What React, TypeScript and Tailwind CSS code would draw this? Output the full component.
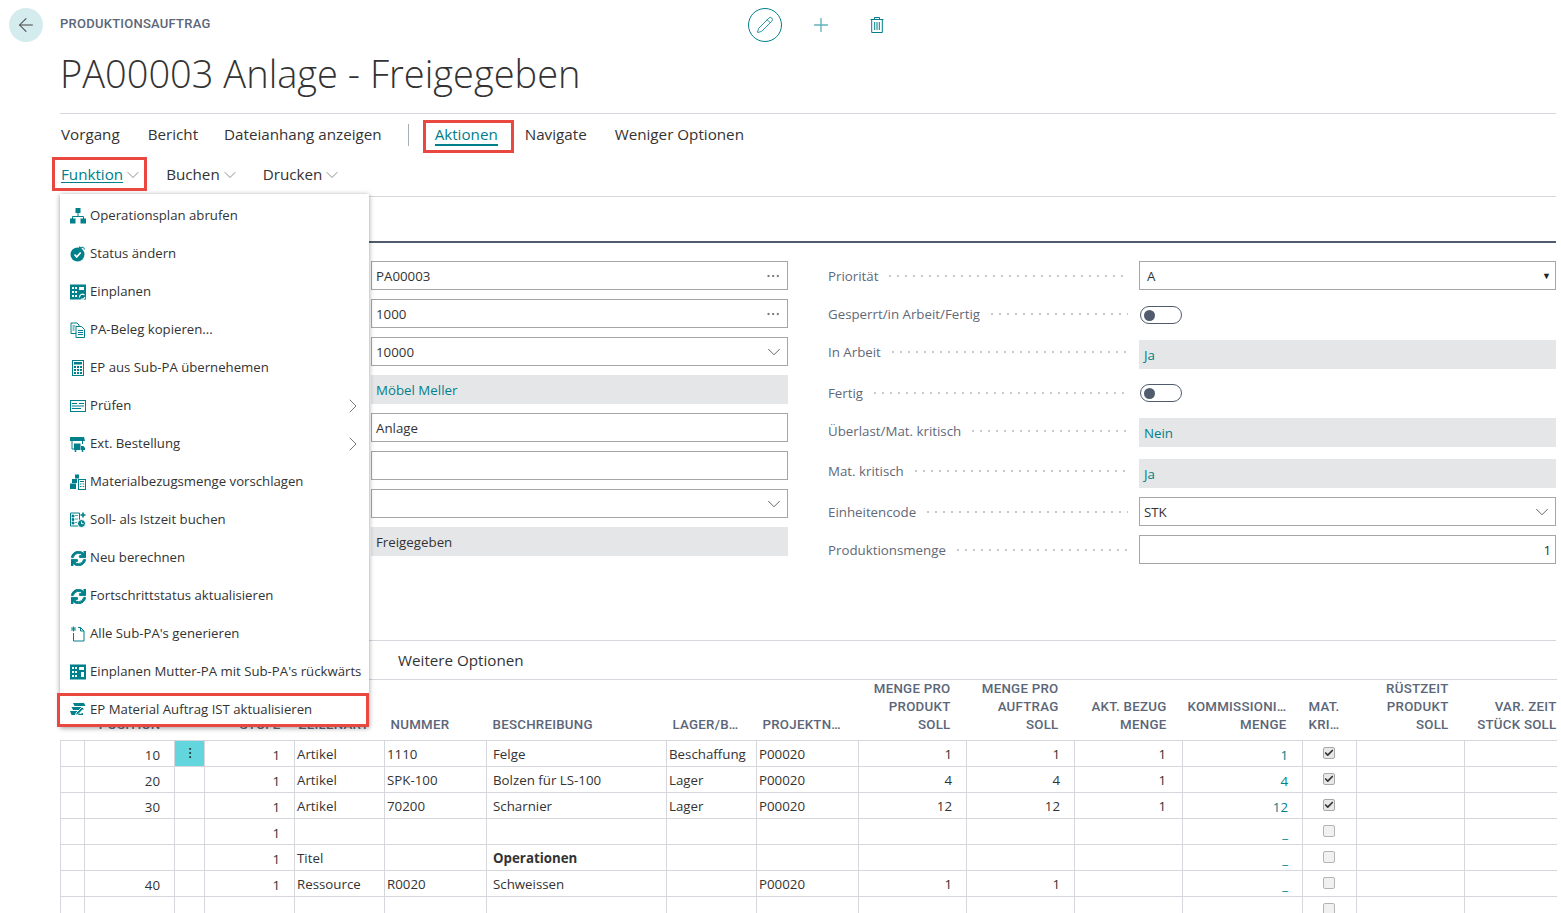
import React from 'react';
import { ArrowLeft, ChevronDown, ChevronRight, EllipsisVertical, Ellipsis, Pencil, Plus, Check } from 'lucide-react';
import { FaSync } from 'react-icons/fa';

const TEAL = '#00808a';

function Svg({ children }: { children: React.ReactNode }) {
  return (
    <svg width="16" height="16" viewBox="0 0 16 16" fill="none" stroke={TEAL} strokeWidth="1" className="shrink-0">
      {children}
    </svg>
  );
}

function OrgIcon() {
  return (
    <Svg>
      <rect x="5.5" y="0" width="5" height="5" fill={TEAL} stroke="none" />
      <path d="M8 5v4M2.5 11V8.5h11V11" />
      <rect x="0" y="10.5" width="5.5" height="5" fill={TEAL} stroke="none" />
      <rect x="10.5" y="10.5" width="5.5" height="5" fill={TEAL} stroke="none" />
    </Svg>
  );
}

function StatusIcon() {
  return (
    <Svg>
      <circle cx="7.5" cy="8.5" r="7" fill={TEAL} stroke="none" />
      <path d="M4.5 8.5l2.2 2.4 4-4.4" stroke="#fff" strokeWidth="1.7" />
      <path d="M9.5 2.2c2-1.8 4.5-1 5 1.3M9.5 0.5v2.3h2.3" stroke={TEAL} strokeWidth="1.1" fill="#fff" />
    </Svg>
  );
}

function PlanIcon({ arrow }: { arrow?: boolean }) {
  return (
    <Svg>
      <rect x="0" y="0.5" width="16" height="15" fill={TEAL} stroke="none" />
      <path d="M2 3h2v2H2zM5 3h2v2H5zM2 7h2v2H2zM5 7h2v2H5zM2 11h2v2H2zM5 11h2v2H5zM9 3h5v3H9z" fill="#fff" stroke="none" />
      {arrow && <path d="M9.5 13.5a3 3 0 0 1 5-2.5M15 13a3 3 0 0 1-4 2" stroke="#fff" strokeWidth="1.2" />}
      {!arrow && <path d="M11 8h3v5h-3z" fill="#fff" stroke="none" />}
    </Svg>
  );
}

function CopyIcon() {
  return (
    <Svg>
      <path d="M6 11.5H1V1h6l2 2v1.5" />
      <path d="M6 4.5h5.5l3 3v8H6z" fill="#fff" />
      <path d="M8 8.5h5M8 10.5h5M8 12.5h5M2.5 4h3M2.5 6h2M2.5 8h2" />
    </Svg>
  );
}

function CalcIcon() {
  return (
    <Svg>
      <rect x="2.5" y="0.5" width="11" height="15" />
      <rect x="4" y="2" width="8" height="2.5" fill={TEAL} stroke="none" />
      <path d="M4 6h2v2H4zM7 6h2v2H7zM10 6h2v2h-2zM4 9h2v2H4zM7 9h2v2H7zM10 9h2v2h-2zM4 12h2v2H4zM7 12h2v2H7zM10 12h2v2h-2z" fill={TEAL} stroke="none" />
    </Svg>
  );
}

function CheckListIcon() {
  return (
    <Svg>
      <rect x="0.5" y="2.5" width="15" height="11" />
      <path d="M2 5.5h5M9 5.5h5M2 8h12M2 10.5h9" />
    </Svg>
  );
}

function StoreIcon() {
  return (
    <Svg>
      <path d="M0 1h14l1 4H0z" fill={TEAL} stroke="none" />
      <path d="M2 5v8h2M12.5 5v3" />
      <rect x="4" y="7.5" width="6.5" height="6.5" fill={TEAL} stroke="none" />
      <path d="M11 10h2.5l1.5 2v2h-4z" stroke="none" fill={TEAL} />
      <circle cx="5.5" cy="15" r="1" fill={TEAL} stroke="none" />
      <circle cx="12.5" cy="15" r="1" fill={TEAL} stroke="none" />
    </Svg>
  );
}

function BoxesIcon() {
  return (
    <Svg>
      <path d="M5 0.5h4v4H5z" fill={TEAL} stroke="none" />
      <path d="M2 5h5v4H2zM0 9.5h6V15H0z" fill={TEAL} stroke="none" />
      <rect x="8.5" y="5.5" width="7" height="10" fill="#fff" />
      <path d="M10 7.5h4M10 10h1.5M12.7 10h1.5M10 12.5h1.5M12.7 12.5h1.5" />
    </Svg>
  );
}

function TimeIcon() {
  return (
    <Svg>
      <path d="M0.5 1h9v13h-9z" />
      <path d="M2 3h2v2H2zM2 6.5h2v2H2zM2 10h2v2H2zM5 3.5h3M5 7h3M5 10.5h2" fill={TEAL} stroke={TEAL} strokeWidth="0.7" />
      <path d="M13 0.5v5M10.5 3h5" strokeWidth="1.6" />
      <circle cx="11.5" cy="11.5" r="4" fill={TEAL} stroke="#fff" />
      <path d="M11.5 9.5v2.2h2" stroke="#fff" />
    </Svg>
  );
}

function SyncIcon() {
  return (
    <span className="w-4 h-4 shrink-0 flex items-center justify-center">
      <FaSync size={15} color={TEAL} stroke={TEAL} strokeWidth={30} />
    </span>
  );
}

function NewDocIcon() {
  return (
    <Svg>
      <path d="M8 1.5h2.5l3.5 3.5v10H3.5V7" />
      <path d="M10.5 1.5V5H14" />
      <path d="M3.5 0.5v5M1 3h5M1.5 1l4 4M5.5 1l-4 4" strokeWidth="0.9" />
    </Svg>
  );
}

function UpdateIcon() {
  return (
    <Svg>
      <path d="M3 1h11l1.5 3H4.5z" fill={TEAL} stroke="none" />
      <path d="M1.5 5h11l1.5 3H3z" fill={TEAL} stroke="none" />
      <path d="M0 9h9l1 3 3-1v2H1.5z" fill={TEAL} stroke="none" />
      <path d="M6 11l6-6 2 1.5-6 6-2.5.7z" fill={TEAL} stroke="#fff" strokeWidth="0.9" />
    </Svg>
  );
}

function TrashIcon() {
  return (
    <svg width="14" height="16" viewBox="0 0 14 16" fill="none" stroke={TEAL} strokeWidth="1">
      <path d="M0.5 2.5h13M4.5 2.5V0.5h5v2M1.7 2.5v13h10.6v-13M4.7 5v8M7 5v8M9.3 5v8" />
    </svg>
  );
}

const menuItems: { icon: React.ReactNode; label: string; sub?: boolean }[] = [
  { icon: <OrgIcon />, label: 'Operationsplan abrufen' },
  { icon: <StatusIcon />, label: 'Status ändern' },
  { icon: <PlanIcon arrow />, label: 'Einplanen' },
  { icon: <CopyIcon />, label: 'PA-Beleg kopieren...' },
  { icon: <CalcIcon />, label: 'EP aus Sub-PA übernehemen' },
  { icon: <CheckListIcon />, label: 'Prüfen', sub: true },
  { icon: <StoreIcon />, label: 'Ext. Bestellung', sub: true },
  { icon: <BoxesIcon />, label: 'Materialbezugsmenge vorschlagen' },
  { icon: <TimeIcon />, label: 'Soll- als Istzeit buchen' },
  { icon: <SyncIcon />, label: 'Neu berechnen' },
  { icon: <SyncIcon />, label: 'Fortschrittstatus aktualisieren' },
  { icon: <NewDocIcon />, label: "Alle Sub-PA's generieren" },
  { icon: <PlanIcon />, label: "Einplanen Mutter-PA mit Sub-PA's rückwärts" },
  { icon: <UpdateIcon />, label: 'EP Material Auftrag IST aktualisieren' },
];

function TextField({ value, trail }: { value?: string; trail?: 'dots' | 'chevron' }) {
  return (
    <div className="h-[29px] border border-[#a6a6a6] bg-white flex items-center justify-between pl-1">
      <span>{value}</span>
      {trail === 'dots' && <Ellipsis size={16} strokeWidth={1.2} className="mr-[6px] text-[#555]" />}
      {trail === 'chevron' && <ChevronDown size={22} strokeWidth={0.9} className="mr-0.5 text-[#444]" />}
    </div>
  );
}

function ReadOnly({ value, teal }: { value: string; teal?: boolean }) {
  return (
    <div className={teal ? 'h-[29px] bg-[#e5e6e8] flex items-center pl-[5px] text-[#00808a]' : 'h-[29px] bg-[#e5e6e8] flex items-center pl-[5px]'}>
      {value}
    </div>
  );
}

function Toggle() {
  return (
    <div className="ml-px mt-[6px] w-[42px] h-[18px] rounded-full border border-[#505c6d] flex items-center pl-[3px]">
      <div className="w-[11px] h-[11px] rounded-full bg-[#505c6d]" />
    </div>
  );
}

function Row({ label, height, labelH, children }: { label: string; height: string; labelH: string; children: React.ReactNode }) {
  return (
    <div className={`flex ${height}`}>
      <div className={`w-[311px] shrink-0 ${labelH} flex items-center gap-2 pr-[11px] text-[#5f6978]`}>
        <span className="shrink-0">{label}</span>
        <div className="flex-1 h-[4px] bg-[radial-gradient(circle,#c6cacf_1px,transparent_1.2px)] bg-[length:8px_4px] bg-repeat-x" />
      </div>
      <div className="flex-1">{children}</div>
    </div>
  );
}

const colWidths = ['w-[24px]', 'w-[90px]', 'w-[30px]', 'w-[90px]', 'w-[90px]', 'w-[102px]', 'w-[180px]', 'w-[90px]', 'w-[102px]', 'w-[108px]', 'w-[108px]', 'w-[108px]', 'w-[120px]', 'w-[54px]', 'w-[108px]', 'w-[92px]'];

const rows = [
  { pos: '10', art: 'Artikel', nr: '1110', desc: 'Felge', lager: 'Beschaffung', proj: 'P00020', a: '1', b: '1', c: '1', k: '1', checked: true, menu: true },
  { pos: '20', art: 'Artikel', nr: 'SPK-100', desc: 'Bolzen für LS-100', lager: 'Lager', proj: 'P00020', a: '4', b: '4', c: '1', k: '4', checked: true },
  { pos: '30', art: 'Artikel', nr: '70200', desc: 'Scharnier', lager: 'Lager', proj: 'P00020', a: '12', b: '12', c: '1', k: '12', checked: true },
  { k: '_' },
  { art: 'Titel', desc: 'Operationen', bold: true, k: '_' },
  { pos: '40', art: 'Ressource', nr: 'R0020', desc: 'Schweissen', proj: 'P00020', a: '1', b: '1', k: '_' },
  {},
] as { pos?: string; art?: string; nr?: string; desc?: string; lager?: string; proj?: string; a?: string; b?: string; c?: string; k?: string; checked?: boolean; menu?: boolean; bold?: boolean }[];

const cell = 'h-[26px] border-b border-l border-[#d5d7dc] p-0 align-middle whitespace-nowrap overflow-hidden';
const head = 'border-0 p-0 pb-[6.4px] align-bottom font-medium text-[13.3px] leading-[17.8px] tracking-[0.25px] text-[#5b6678] whitespace-nowrap';

function Checkbox({ checked }: { checked?: boolean }) {
  return (
    <div className={checked ? 'ml-5 w-3 h-3 rounded-[2px] border border-[#a8a8a8] bg-[#e8e8e8] flex items-center justify-center' : 'ml-5 w-3 h-3 rounded-[2px] border border-[#b4b4b4] bg-[#f1f1f1]'}>
      {checked && <Check size={10} strokeWidth={4} className="text-[#333]" />}
    </div>
  );
}

export default function App() {
  return (
    <div className="relative w-[1561px] h-[913px] overflow-hidden bg-white pr-[5px] text-[13px] text-[#333] font-['Open_Sans',sans-serif]">
      {/* Header */}
      <div className="flex h-[50px] pt-2">
        <div className="w-[60px] shrink-0 pl-[9px]">
          <div className="w-[34px] h-[34px] rounded-full bg-[#d5ecef] flex items-center justify-center">
            <ArrowLeft size={22} strokeWidth={1.1} className="text-[#444]" />
          </div>
        </div>
        <div className="w-[688px] shrink-0 pt-[6px] font-['Roboto',sans-serif] font-medium text-[13px] leading-[20px] tracking-[0.25px] text-[#5b6678]">PRODUKTIONSAUFTRAG</div>
        <div className="flex items-center h-[34px]">
          <div className="w-[34px] h-[34px] rounded-full border border-[#00808a] flex items-center justify-center">
            <Pencil size={18} strokeWidth={1.1} className="text-[#00808a]" />
          </div>
          <Plus size={22} strokeWidth={1.5} className="ml-[28px] text-[#5fb3b8]" />
          <div className="ml-[38px]"><TrashIcon /></div>
        </div>
      </div>

      <div className="pl-[60px]">
        <h1 className="h-[63px] font-['Open_Sans',sans-serif] font-light text-[38px] leading-[47px] text-[#333]">PA00003 Anlage - Freigegeben</h1>

        {/* Action bars */}
        <div className="border-t border-[#d5d7dc] h-[42px] flex items-center text-[15.2px] pl-px">
          <span>Vorgang</span>
          <span className="ml-[28px]">Bericht</span>
          <span className="ml-[26px]">Dateianhang anzeigen</span>
          <div className="ml-[26px] w-px h-[22px] bg-[#a6adb5]" />
          <span className="ml-[26px] border-b-2 border-[#00808a] text-[#00808a] leading-[20px]">Aktionen</span>
          <span className="ml-[27px]">Navigate</span>
          <span className="ml-[28px]">Weniger Optionen</span>
        </div>
        <div className="border-b border-[#d5d7dc] h-[42px] flex items-center text-[15.2px] pl-px pb-[2px]">
          <span className="text-[#00808a] underline underline-offset-2">Funktion</span>
          <ChevronDown size={20} strokeWidth={0.8} className="text-[#555]" />
          <span className="ml-[23px]">Buchen</span>
          <ChevronDown size={20} strokeWidth={0.8} className="text-[#555]" />
          <span className="ml-[23px]">Drucken</span>
          <ChevronDown size={20} strokeWidth={0.8} className="text-[#555]" />
        </div>

        {/* Form */}
        <div className="h-[46px] border-b-2 border-[#505c6d]" />
        <div className="flex pt-[18px] h-[397px] text-[13.3px] leading-[18px]">
          <div className="w-[728px] shrink-0 pl-[311px] flex flex-col gap-[9px]">
            <TextField value="PA00003" trail="dots" />
            <TextField value="1000" trail="dots" />
            <TextField value="10000" trail="chevron" />
            <ReadOnly value="Möbel Meller" teal />
            <TextField value="Anlage" />
            <TextField />
            <TextField trail="chevron" />
            <ReadOnly value="Freigegeben" />
          </div>
          <div className="ml-[40px] flex-1 flex flex-col">
            <Row label="Priorität" height="h-[39px]" labelH="h-[30px]">
              <div className="h-[29px] border border-[#a6a6a6] flex items-center justify-between pl-[7px] pr-[4px]">
                <span>A</span>
                <span className="text-[9px] text-[#222]">▼</span>
              </div>
            </Row>
            <Row label="Gesperrt/in Arbeit/Fertig" height="h-[40px]" labelH="h-[28px]"><Toggle /></Row>
            <Row label="In Arbeit" height="h-[38px]" labelH="h-[24px]"><ReadOnly value="Ja" teal /></Row>
            <Row label="Fertig" height="h-[40px]" labelH="h-[30px]"><Toggle /></Row>
            <Row label="Überlast/Mat. kritisch" height="h-[41px]" labelH="h-[26px]"><ReadOnly value="Nein" teal /></Row>
            <Row label="Mat. kritisch" height="h-[38px]" labelH="h-[24px]"><ReadOnly value="Ja" teal /></Row>
            <Row label="Einheitencode" height="h-[38px]" labelH="h-[30px]"><TextField value="STK" trail="chevron" /></Row>
            <Row label="Produktionsmenge" height="h-[38px]" labelH="h-[30px]">
              <div className="h-[29px] border border-[#a6a6a6] flex items-center justify-end pr-1">1</div>
            </Row>
          </div>
        </div>

        {/* Lines */}
        <div className="border-t border-[#d5d7dc] h-[39px] flex items-center text-[15.2px] pl-[338px]">Weitere Optionen</div>
        <table className="table-fixed w-[1496px] border-collapse border-t border-[#d5d7dc] text-[13.3px] leading-[18px]">
          <colgroup>
            {colWidths.map((w, i) => <col key={i} className={w} />)}
          </colgroup>
          <thead className="border-b border-[#d5d7dc]">
            <tr className="h-[60px] font-['Roboto',sans-serif]">
              <th className={head} />
              <th className={`${head} text-right pr-3.5`}>POSITION</th>
              <th className={head} />
              <th className={`${head} text-right pr-3.5`}>STUFE</th>
              <th className={`${head} text-left pl-1`}>ZEILENART</th>
              <th className={`${head} text-left pl-1.5`}>NUMMER</th>
              <th className={`${head} text-left pl-1.5`}>BESCHREIBUNG</th>
              <th className={`${head} text-left pl-1.5`}>LAGER/B…</th>
              <th className={`${head} text-left pl-1.5`}>PROJEKTN…</th>
              <th className={`${head} text-right pr-4`}>MENGE PRO<br />PRODUKT<br />SOLL</th>
              <th className={`${head} text-right pr-4`}>MENGE PRO<br />AUFTRAG<br />SOLL</th>
              <th className={`${head} text-right pr-4`}>AKT. BEZUG<br />MENGE</th>
              <th className={`${head} text-right pr-4`}>KOMMISSIONI…<br />MENGE</th>
              <th className={`${head} text-left pl-1.5`}>MAT.<br />KRI…</th>
              <th className={`${head} text-right pr-4`}>RÜSTZEIT<br />PRODUKT<br />SOLL</th>
              <th className={`${head} text-right`}>VAR. ZEIT<br />STÜCK SOLL</th>
            </tr>
          </thead>
          <tbody>
            {rows.map((r, i) => (
              <tr key={i} className="h-[26px]">
                <td className={cell} />
                <td className={`${cell} text-right pr-3.5 pt-[3px]`}>{r.pos}</td>
                <td className={r.menu ? `${cell} bg-[#62d6dc]` : cell}>
                  {r.menu && <EllipsisVertical size={14} strokeWidth={1.5} className="mx-auto text-[#222]" />}
                </td>
                <td className={`${cell} text-right pr-3.5 pt-[3px]`}>{i < 6 ? '1' : ''}</td>
                <td className={`${cell} pl-0.5 pt-px`}>{r.art}</td>
                <td className={`${cell} pl-0.5 pt-px`}>{r.nr}</td>
                <td className={r.bold ? `${cell} pl-1.5 pt-px font-bold` : `${cell} pl-1.5 pt-px`}>{r.desc}</td>
                <td className={`${cell} pl-0.5 pt-px`}>{r.lager}</td>
                <td className={`${cell} pl-0.5 pt-px`}>{r.proj}</td>
                <td className={`${cell} text-right pr-3.5 pt-px`}>{r.a}</td>
                <td className={`${cell} text-right pr-3.5 pt-px`}>{r.b}</td>
                <td className={`${cell} text-right pr-4 pt-px`}>{r.c}</td>
                <td className={`${cell} text-right pr-3.5 pt-[3px] text-[#00808a]`}>{r.k}</td>
                <td className={cell}><Checkbox checked={r.checked} /></td>
                <td className={cell} />
                <td className={cell} />
              </tr>
            ))}
          </tbody>
        </table>
      </div>

      {/* Dropdown menu */}
      <div className="absolute left-[60px] top-[194px] w-[309px] h-[533px] bg-white pt-[3px] shadow-[0_1px_5px_rgba(0,0,0,0.4)] text-[13.2px]">
        {menuItems.map((m) => (
          <div key={m.label} className="h-[38px] flex items-center pl-[10px] pr-[4px] gap-1 whitespace-nowrap">
            {m.icon}
            <span className="flex-1">{m.label}</span>
            {m.sub && <ChevronRight size={24} strokeWidth={0.8} className="text-[#555]" />}
          </div>
        ))}
      </div>

      {/* Annotation boxes */}
      <div className="absolute left-[423px] top-[120px] w-[91px] h-[33px] border-[3px] border-[#e8483f]" />
      <div className="absolute left-[52px] top-[157px] w-[95px] h-[34px] border-[3px] border-[#e8483f]" />
      <div className="absolute left-[57px] top-[693px] w-[312px] h-[34px] border-[3px] border-[#e8483f]" />
    </div>
  );
}
